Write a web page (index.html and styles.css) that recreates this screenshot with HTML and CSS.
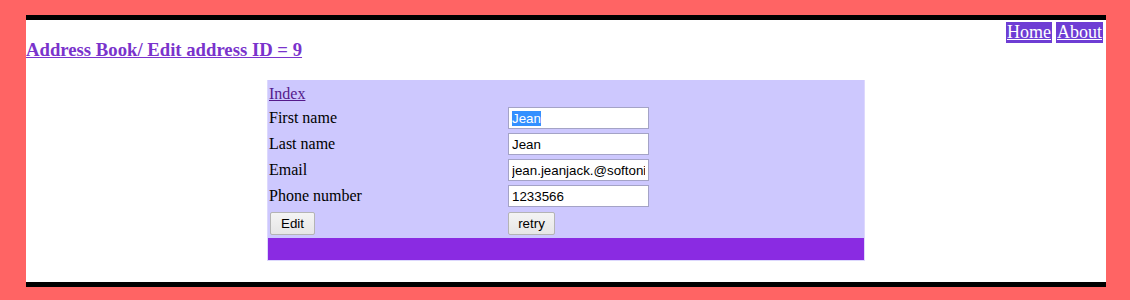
FILE: index.html
```html
<!DOCTYPE html>
<html lang="en">
<head>
<meta charset="utf-8">
<title>Address Book - Edit address</title>
<link rel="stylesheet" href="styles.css">
</head>
<body>
<div class="page">
  <nav class="topbar">
    <a class="nav-link" href="#">Home</a>
    <a class="nav-link" href="#">About</a>
  </nav>
  <h3 class="title"><a href="#">Address Book/ Edit address ID = 9</a></h3>
  <form class="card">
    <div class="row row-index"><a class="index-link" href="#">Index</a></div>
    <div class="row"><label class="lbl" for="first">First name</label><input class="field" id="first" type="text" value="Jean"></div>
    <div class="row"><label class="lbl" for="last">Last name</label><input class="field" id="last" type="text" value="Jean"></div>
    <div class="row"><label class="lbl" for="email">Email</label><input class="field" id="email" type="text" value="jean.jeanjack.@softonic.com"></div>
    <div class="row"><label class="lbl" for="phone">Phone number</label><input class="field" id="phone" type="text" value="1233566"></div>
    <div class="row row-actions"><button class="btn btn-edit" type="button">Edit</button><button class="btn btn-retry" type="button">retry</button></div>
    <div class="bar"></div>
  </form>
</div>
<script src="script.js"></script>
</body>
</html>
```

FILE: styles.css
```css
html, body {
  margin: 0;
  padding: 0;
}
body {
  background: #ff6464;
  font-family: "Liberation Serif", "Times New Roman", serif;
  font-size: 16px;
  color: #000;
}
.page {
  margin: 15px 24px 0 26px;
  background: #fff;
  border-top: 5px solid #000;
  border-bottom: 5px solid #000;
  height: 262px;
}
.topbar {
  display: flex;
  justify-content: flex-end;
  gap: 4px;
  box-sizing: border-box;
  height: 19px;
  padding: 2px 3px 0 0;
}
.nav-link {
  display: inline-block;
  height: 21px;
  line-height: 21px;
  padding: 0 1px;
  font-size: 18px;
  color: #fff;
  background: #6e3dd4;
  text-decoration: underline;
}
.title {
  margin: 0 0 19px;
  font-size: 18.72px;
  line-height: 22px;
  font-weight: bold;
}
.title a {
  color: #7a33cc;
  text-decoration: underline;
}
.card {
  box-sizing: border-box;
  width: 598px;
  margin: 0 auto;
  background: #cdc8fe;
  border: 1px solid #ddd8fd;
  border-top: 0;
  padding-top: 4px;
  display: flex;
  flex-direction: column;
}
.row {
  display: grid;
  grid-template-columns: 240px 141px;
  align-items: center;
  height: 22px;
  margin-top: 4px;
}
.row-index {
  height: 19px;
  margin-top: 0;
  display: flex;
}
.index-link {
  padding-left: 1px;
  color: #551a8b;
  text-decoration: underline;
  line-height: 19px;
}
.lbl {
  padding-left: 1px;
}
.field {
  box-sizing: border-box;
  width: 141px;
  height: 22px;
  margin: 0;
  padding: 0 3px;
  border: 1px solid #a4a3c6;
  background: #fff;
  font-family: "Liberation Sans", Arial, sans-serif;
  font-size: 13.33px;
  color: #000;
}
.field:focus {
  outline: none;
}
.field::selection {
  background: #3390ff;
  color: #fff;
}
.row-actions {
  height: 23px;
  margin-top: 5px;
}
.btn {
  box-sizing: border-box;
  height: 23px;
  margin: 0;
  padding: 0;
  border: 1px solid #b4b4b4;
  border-radius: 2px;
  background: linear-gradient(#f4f4f4, #e6e6e6);
  font-family: "Liberation Sans", Arial, sans-serif;
  font-size: 13.33px;
  color: #000;
}
.btn-edit {
  width: 45px;
  margin-left: 2px;
}
.btn-retry {
  width: 47px;
}
.bar {
  height: 22px;
  margin-top: 3px;
  background: #8a2be2;
}
```

FILE: script.js
```js
var f = document.getElementById('first');
f.focus();
f.setSelectionRange(0, f.value.length);
```
